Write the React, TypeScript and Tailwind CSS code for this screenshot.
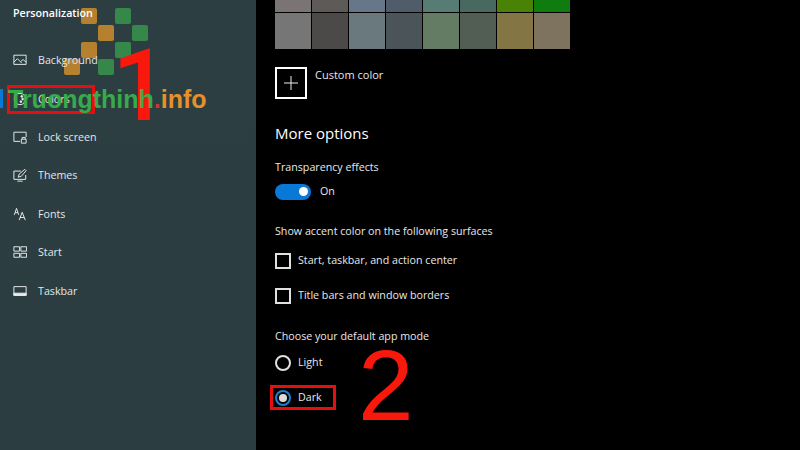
const row1 = ["#7a7574", "#5d5a58", "#68768a", "#515c6b", "#567c73", "#486860", "#498205", "#107c10"];
const row2 = ["#767676", "#4c4a48", "#69797e", "#4a5459", "#647c64", "#525e54", "#847545", "#7e735f"];

const ico = { width: 14, height: 14, viewBox: "0 0 16 16", fill: "none", stroke: "#e6eaea", strokeWidth: 1.1 };

const items: [string, React.ReactNode][] = [
  ["Background", <svg {...ico}><path d="M1 2.500h14v10.500H1z" /><path d="M1 10.500l4-4 5 5M9 9.500l2.500-2 3.500 3" /></svg>],
  ["Colors", <svg {...ico}><circle cx="8" cy="8" r="6.500" /><circle cx="10" cy="5" r="1" fill="#e6eaea" /><circle cx="11" cy="8" r="1" fill="#e6eaea" /><circle cx="9" cy="11" r="1" fill="#e6eaea" /></svg>],
  ["Lock screen", <svg {...ico}><path d="M8 13H1V2.500h14V8" /><path d="M9.500 10.500h5.500v4.500H9.500zM10.500 10.500V8.500h3.500v2" /></svg>],
  ["Themes", <svg {...ico}><path d="M9 3.500H1v9.500h13.500V8M5 15h6" /><path d="M6 10.500l1-3.500 6.500-5.500L15 3l-5.500 6.500z" /></svg>],
  ["Fonts", <svg {...ico}><path d="M1.500 9l2.500-7.500L6.500 9M2.500 6.500h3M7 15l3.500-9 3.500 9M8 12h5" /></svg>],
  ["Start", <svg {...ico}><path d="M1 2h6.500v5H1zM9 2h6.500v5H9zM1 9.500h6.500v4.500H1zM9 9.500h6.500v4.500H9z" /></svg>],
  ["Taskbar", <svg {...ico}><path d="M1 3h14v10H1z" /><path d="M1 10.500h14V13H1z" fill="#e6eaea" /></svg>],
];

function Check({ label }: { label: string }) {
  return (
    <div className="flex items-center gap-[7px] h-4">
      <div className="w-4 h-4 border-2 border-[#e0e0e0] shrink-0" />
      <span>{label}</span>
    </div>
  );
}

export default function App() {
  return (
    <div className="relative w-[800px] h-[450px] overflow-hidden bg-black flex font-['Open_Sans','Noto_Sans',sans-serif] text-[10.7px] text-[#e8e8e8]">
      <aside className="w-[256px] h-full shrink-0 bg-gradient-to-b from-[#2d3e42] to-[#2b3d41] relative pl-[13px] pt-[6px]">
        {/* watermark logo sits under the sidebar text */}
        <svg className="absolute left-[64px] top-[8px]" width="85" height="68" viewBox="0 0 85 68">
          <g fill="#b5812f">
            <rect x="17" y="0" width="16" height="16" rx="2" />
            <rect x="34" y="17" width="16" height="16" rx="2" />
            <rect x="17" y="34" width="16" height="16" rx="2" />
            <rect x="0" y="51" width="16" height="16" rx="2" />
          </g>
          <g fill="#35874a">
            <rect x="51" y="0" width="16" height="16" rx="2" />
            <rect x="68" y="17" width="16" height="16" rx="2" />
            <rect x="51" y="34" width="16" height="16" rx="2" />
            <rect x="34" y="51" width="16" height="16" rx="2" />
          </g>
        </svg>
        <div className="relative h-[15px] leading-[15px] font-semibold text-white">Personalization</div>
        <div className="relative mt-[20px] flex flex-col">
          {items.map(([label, icon]) => (
            <div key={label} className="h-[38.4px] flex items-center gap-[11px] text-[#e2e6e6]">
              {icon}
              <span>{label}</span>
            </div>
          ))}
        </div>
      </aside>
      <main className="flex-1 pl-[19px]">
        <div className="-mt-[24px] grid grid-cols-[repeat(8,35.5px)] auto-rows-[35.5px] gap-[1.500px]">
          {[...row1, ...row2].map((c, i) => (
            <div key={i} style={{ background: c }} />
          ))}
        </div>
        <div className="mt-[18px] flex gap-2 h-8">
          <div className="w-8 h-8 border-2 border-white flex items-center justify-center shrink-0">
            <svg width="14" height="14" viewBox="0 0 14 14" stroke="#eee" strokeWidth="1"><path d="M7 0v14M0 7h14" /></svg>
          </div>
          <span className="leading-[15px] text-[11px]">Custom color</span>
        </div>
        <div className="mt-[24px] text-[15px] leading-[20px] text-white">More options</div>
        <div className="mt-[17px] leading-[15px]">Transparency effects</div>
        <div className="mt-[9px] flex items-center gap-[9px] h-4">
          <div className="w-9 h-4 rounded-full bg-[#0a78d7] flex items-center justify-end pr-[3px]">
            <div className="w-[9px] h-[9px] rounded-full bg-white" />
          </div>
          <span>On</span>
        </div>
        <div className="mt-[24px] leading-[15px]">Show accent color on the following surfaces</div>
        <div className="mt-[14px] flex flex-col gap-[19px]">
          <Check label="Start, taskbar, and action center" />
          <Check label="Title bars and window borders" />
        </div>
        <div className="mt-[25px] leading-[15px]">Choose your default app mode</div>
        <div className="mt-[11px] flex flex-col gap-[19px]">
          <div className="flex items-center gap-[7px] h-4">
            <div className="w-4 h-4 rounded-full border-2 border-[#e0e0e0]" />
            <span>Light</span>
          </div>
          <div className="flex items-center gap-[7px] h-4">
            <div className="w-4 h-4 rounded-full border-2 border-[#1f7fd0] flex items-center justify-center">
              <div className="w-2 h-2 rounded-full bg-[#dcdcdc]" />
            </div>
            <span>Dark</span>
          </div>
        </div>
      </main>

      {/* left-edge selection marker */}
      <div className="absolute left-0 top-[89px] w-[3px] h-[19px] bg-[#0a78d7]" />

      {/* annotations */}
      <div className="absolute left-[7px] top-[85px] w-[88px] h-[29px] border-[3px] border-[#e60f0f]" />
      <div className="absolute left-[270px] top-[385px] w-[66px] h-[25px] border-[3px] border-[#e60f0f]" />
      <div className="absolute left-[112px] top-[36px] font-['Roboto',sans-serif] font-medium text-[101px] leading-[100px] text-[#f8180c]">1</div>
      <div className="absolute left-[358px] top-[335px] font-['Liberation_Sans',sans-serif] text-[100px] leading-[100px] text-[#f8180c]">2</div>

      {/* watermark text over everything */}
      <div className="absolute left-[8px] top-[84px] opacity-95 font-['Liberation_Sans',sans-serif] font-bold text-[25px] leading-[30px] whitespace-nowrap text-[#38b04a]">
        Truongthinh<span className="text-[#d9372c]">.</span><span className="text-[#ee962a]">info</span>
      </div>
    </div>
  );
}
